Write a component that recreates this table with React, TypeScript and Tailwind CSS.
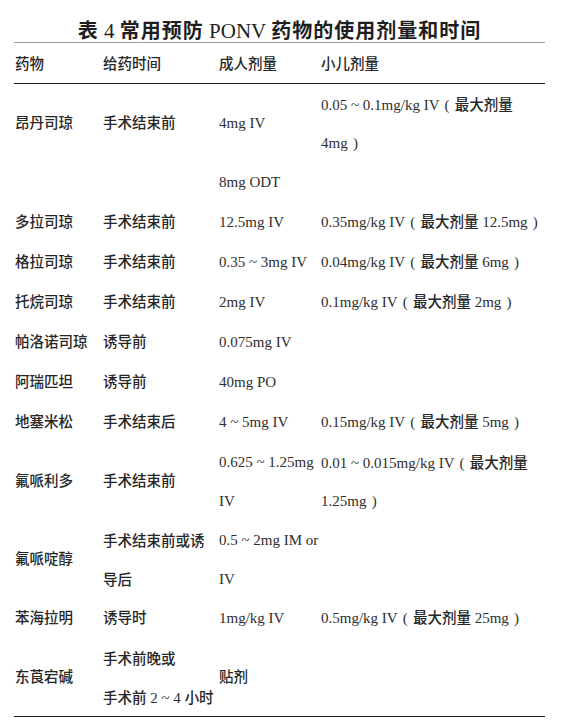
import React from 'react';

type Cell = string | string[];
type Row = [Cell, Cell, Cell, Cell];

const rows: Row[] = [
  ['昂丹司琼', '手术结束前', '4mg IV', ['0.05 ~ 0.1mg/kg IV ( 最大剂量', '4mg )']],
  ['', '', '8mg ODT', ''],
  ['多拉司琼', '手术结束前', '12.5mg IV', '0.35mg/kg IV ( 最大剂量 12.5mg )'],
  ['格拉司琼', '手术结束前', '0.35 ~ 3mg IV', '0.04mg/kg IV ( 最大剂量 6mg )'],
  ['托烷司琼', '手术结束前', '2mg IV', '0.1mg/kg IV ( 最大剂量 2mg )'],
  ['帕洛诺司琼', '诱导前', '0.075mg IV', ''],
  ['阿瑞匹坦', '诱导前', '40mg PO', ''],
  ['地塞米松', '手术结束后', '4 ~ 5mg IV', '0.15mg/kg IV ( 最大剂量 5mg )'],
  ['氟哌利多', '手术结束前', ['0.625 ~ 1.25mg', 'IV'], ['0.01 ~ 0.015mg/kg IV ( 最大剂量', '1.25mg )']],
  ['氟哌啶醇', ['手术结束前或诱', '导后'], ['0.5 ~ 2mg IM or', 'IV'], ''],
  ['苯海拉明', '诱导时', '1mg/kg IV', '0.5mg/kg IV ( 最大剂量 25mg )'],
  ['东莨宕碱', ['手术前晚或', '手术前 2 ~ 4 小时'], '贴剂', ''],
];

const lineCount = (c: Cell) => (Array.isArray(c) ? c.length : 1);

// CJK runs in a sans face, everything else in a Times-like serif
const Mixed = ({ text }: { text: string }) => (
  <>
    {text.split(/([\u4e00-\u9fff]+)/).map((part, i) =>
      i % 2 === 1 ? (
        <span key={i} className="font-['Noto_Sans_CJK_SC',sans-serif] text-[14.5px] font-medium text-[#262626]">
          {part}
        </span>
      ) : (
        part.split(/([()])/).map((p, j) =>
          j % 2 === 1 ? (
            <span key={`${i}-${j}`} className="font-['Liberation_Serif',serif] text-[15px] text-[#2e2e2e] px-[1.5px]">
              {p}
            </span>
          ) : (
            <span key={`${i}-${j}`} className="font-['Liberation_Serif',serif] text-[15px] text-[#2e2e2e]">
              {p}
            </span>
          )
        )
      )
    )}
  </>
);

const CellView = ({ cell, multi }: { cell: Cell; multi: boolean }) => {
  const lines = Array.isArray(cell) ? cell : [cell];
  return (
    <div className={`pl-[1px] flex flex-col justify-center whitespace-pre ${multi ? 'h-[78px]' : 'h-[40px]'}`}>
      {lines.map((l, i) => (
        <div key={i} className={lines.length > 1 ? 'h-[39px] leading-[39px]' : 'leading-[40px]'}>
          <Mixed text={l} />
        </div>
      ))}
    </div>
  );
};

export default function App() {
  return (
    <div className="w-[574px] h-[727px] bg-white overflow-hidden">
      <div className="ml-[14px] w-[531px]">
        <div className="pt-[18px] h-[42px] leading-[24px] text-center whitespace-pre text-[#1e1e1e]">
          <span className="font-['Noto_Sans_CJK_SC',sans-serif] text-[20px] font-semibold tracking-[1px]">表</span>
          <span className="font-['Liberation_Serif',serif] text-[21px]"> 4 </span>
          <span className="font-['Noto_Sans_CJK_SC',sans-serif] text-[20px] font-semibold tracking-[1px]">常用预防</span>
          <span className="font-['Liberation_Serif',serif] text-[21px]"> PONV </span>
          <span className="font-['Noto_Sans_CJK_SC',sans-serif] text-[20px] font-semibold tracking-[1px]">药物的使用剂量和时间</span>
        </div>
        <div className="border-t-[1.5px] border-[#9c9c9c]">
          <div className="grid grid-cols-[88px_116px_102px_1fr] border-b border-[#1a1a1a]">
            {['药物', '给药时间', '成人剂量', '小儿剂量'].map((h) => (
              <div key={h} className="pl-[1px] h-[39.5px] leading-[39.5px]">
                <Mixed text={h} />
              </div>
            ))}
          </div>
          <div className="grid grid-cols-[88px_116px_102px_1fr] border-b border-[#1a1a1a]">
            {rows.map((r, ri) => {
              const multi = r.some((c) => lineCount(c) > 1);
              return r.map((c, ci) => <CellView key={`${ri}-${ci}`} cell={c} multi={multi} />);
            })}
          </div>
        </div>
      </div>
    </div>
  );
}
